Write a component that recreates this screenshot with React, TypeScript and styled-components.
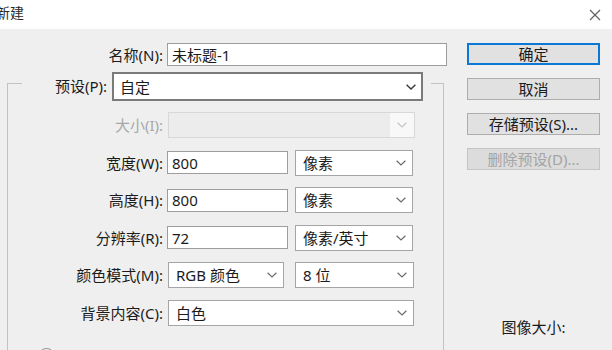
import React from 'react';
import styled, { createGlobalStyle } from 'styled-components';

const GlobalStyle = createGlobalStyle`
  html, body {
    margin: 0;
    padding: 0;
    background: #efefef;
  }
  body {
    font-family: "Noto Sans", "Noto Sans CJK SC", sans-serif;
    overflow: hidden;
  }
`;

type WidthProps = { $w: number };

//small "v" used by every drop-down
const Chevron: React.FC<{ color?: string; weight?: number }> = ({ color = '#6b6b6b', weight = 1.2 }) => (
  <svg width="10" height="6" viewBox="0 0 10 6">
    <path d="M0.6 0.8 L5 5 L9.4 0.8" fill="none" stroke={color} strokeWidth={weight} />
  </svg>
);

const App: React.FC = () => {
  return (
    <Window>
      <GlobalStyle />
      <TitleBar>
        <TitleText>新建</TitleText>
        <CloseButton>
          <svg width="12" height="12" viewBox="0 0 12 12">
            <path d="M1 1 L11 11 M11 1 L1 11" fill="none" stroke="#606060" strokeWidth="1.2" />
          </svg>
        </CloseButton>
      </TitleBar>
      <Body>
        <FormColumn>
          <NameRow>
            <Label $w={163}>名称(N):</Label>
            <TextField $w={280} $h={23}>未标题-1</TextField>
          </NameRow>
          <Group>
            <PresetLegend>
              <LegendLabel>预设(P):</LegendLabel>
              <PresetSelect>
                <span>自定</span>
                <Chevron color="#3c3c3c" weight={1.5} />
              </PresetSelect>
            </PresetLegend>
            <Rows>
              <Row>
                <Label $w={155} $disabled>大小(I):</Label>
                <DisabledSelect $w={247}>
                  <span />
                  <ArrowCell>
                    <Chevron color="#c4c4c4" />
                  </ArrowCell>
                </DisabledSelect>
              </Row>
              <Row>
                <Label $w={155}>宽度(W):</Label>
                <TextField $w={121} $h={23}>800</TextField>
                <Select $w={118}>
                  <span>像素</span>
                  <Chevron />
                </Select>
              </Row>
              <Row>
                <Label $w={155}>高度(H):</Label>
                <TextField $w={121} $h={23}>800</TextField>
                <Select $w={118}>
                  <span>像素</span>
                  <Chevron />
                </Select>
              </Row>
              <Row>
                <Label $w={155}>分辨率(R):</Label>
                <TextField $w={121} $h={23}>72</TextField>
                <Select $w={118}>
                  <span>像素/英寸</span>
                  <Chevron />
                </Select>
              </Row>
              <Row>
                <Label $w={155}>颜色模式(M):</Label>
                <Select $w={116}>
                  <span>RGB 颜色</span>
                  <Chevron />
                </Select>
                <Select $w={119} $gap={11}>
                  <span>8 位</span>
                  <Chevron />
                </Select>
              </Row>
              <Row>
                <Label $w={155}>背景内容(C):</Label>
                <Select $w={246}>
                  <span>白色</span>
                  <Chevron />
                </Select>
              </Row>
            </Rows>
            <AdvancedToggle />
          </Group>
        </FormColumn>
        <SideColumn>
          <Buttons>
            <Button $primary>确定</Button>
            <Button>取消</Button>
            <Button>存储预设(S)...</Button>
            <Button $disabled>删除预设(D)...</Button>
          </Buttons>
          <InfoTitle>图像大小:</InfoTitle>
          <InfoValue>1.83M</InfoValue>
        </SideColumn>
      </Body>
    </Window>
  );
};

const Window = styled.div`
  width: 612px;
  height: 350px;
  overflow: hidden;
  background: #efefef;
  color: #1b1b1b;
  font-size: 15px;
`;
const TitleBar = styled.div`
  box-sizing: border-box;
  width: 612px;
  height: 29px;
  background: #ffffff;
  display: flex;
  align-items: center;
  justify-content: space-between;
  padding: 0 11px 0 0;
`;
const TitleText = styled.span`
  margin-left: -4px;
  font-size: 14px;
  color: #2a2a2a;
  line-height: 20px;
  margin-top: -3px;
`;
const CloseButton = styled.span`
  display: flex;
  width: 12px;
  height: 12px;
  margin-top: 1px;
`;
const Body = styled.div`
  display: flex;
  padding-top: 14px;
`;
const FormColumn = styled.div`
  width: 447px;
  display: flex;
  flex-direction: column;
`;
const NameRow = styled.div`
  display: flex;
  align-items: center;
  height: 23px;
`;
const Label = styled.div<WidthProps & { $disabled?: boolean }>`
  width: ${(p) => p.$w}px;
  flex-shrink: 0;
  text-align: right;
  white-space: nowrap;
  line-height: 20px;
  color: ${(p) => (p.$disabled ? '#a8a8a8' : '#1b1b1b')};
`;
const TextField = styled.div<WidthProps & { $h: number }>`
  box-sizing: border-box;
  width: ${(p) => p.$w}px;
  height: ${(p) => p.$h}px;
  margin-left: 4px;
  padding-left: 4px;
  background: #ffffff;
  border: 1px solid #9d9d9d;
  display: flex;
  align-items: center;
  line-height: 20px;
`;
const Group = styled.fieldset`
  box-sizing: border-box;
  width: 437px;
  height: 320px;
  margin: 6px 0 0 7px;
  padding: 0;
  border: 1px solid #c2c2c2;
  min-width: 0;
`;
const PresetLegend = styled.legend`
  box-sizing: border-box;
  width: 409px;
  height: 22px;
  margin-left: 14px;
  padding: 0 8px 0 0;
  display: flex;
  align-items: flex-start;
`;
const LegendLabel = styled.div`
  width: 85px;
  text-align: right;
  line-height: 29px;
  white-space: nowrap;
`;
const PresetSelect = styled.div`
  box-sizing: border-box;
  width: 311px;
  height: 29px;
  margin-left: 5px;
  flex-shrink: 0;
  background: #ffffff;
  border: 2px solid #7a7a7a;
  display: flex;
  align-items: center;
  justify-content: space-between;
  padding: 0 5px 0 6px;
  line-height: 20px;
`;
const Rows = styled.div`
  display: flex;
  flex-direction: column;
  gap: 11.5px;
  margin-top: 18px;
`;
const Row = styled.div`
  display: flex;
  align-items: center;
  height: 26px;
`;
const Select = styled.div<WidthProps & { $gap?: number }>`
  box-sizing: border-box;
  width: ${(p) => p.$w}px;
  height: 26px;
  margin-left: ${(p) => p.$gap ?? 7}px;
  background: #ffffff;
  border: 1px solid #a5a5a5;
  display: flex;
  align-items: center;
  justify-content: space-between;
  padding: 0 6px 0 7px;
  line-height: 20px;
  white-space: nowrap;
  &:nth-child(2) {
    margin-left: 5px;
  }
`;
const DisabledSelect = styled.div<WidthProps>`
  box-sizing: border-box;
  width: ${(p) => p.$w}px;
  height: 26px;
  margin-left: 5px;
  background: #ececec;
  border: 1px solid #d8d8d8;
  display: flex;
  justify-content: space-between;
`;
const ArrowCell = styled.div`
  width: 24px;
  background: #f8f8f8;
  display: flex;
  align-items: center;
  justify-content: center;
`;
const AdvancedToggle = styled.div`
  width: 15px;
  height: 15px;
  margin: 22px 0 0 30px;
  border: 1px solid #8a8a8a;
  border-radius: 50%;
  background: #f4f4f4;
`;
const SideColumn = styled.div`
  width: 133px;
  margin-left: 20px;
  display: flex;
  flex-direction: column;
  align-items: center;
`;
const Buttons = styled.div`
  width: 100%;
  display: flex;
  flex-direction: column;
  gap: 13px;
`;
const Button = styled.div<{ $primary?: boolean; $disabled?: boolean }>`
  box-sizing: border-box;
  height: 22px;
  display: flex;
  align-items: center;
  justify-content: center;
  line-height: 20px;
  background: ${(p) => (p.$disabled ? '#dcdcdc' : '#e1e1e1')};
  border: ${(p) => (p.$primary ? '2px solid #0a78d4' : p.$disabled ? '1px solid #c4c4c4' : '1px solid #adadad')};
  color: ${(p) => (p.$disabled ? '#a4a4a4' : '#1b1b1b')};
`;
const InfoTitle = styled.div`
  margin-top: 147px;
  line-height: 20px;
`;
const InfoValue = styled.div`
  margin-top: 9px;
  line-height: 20px;
`;

export default App;
